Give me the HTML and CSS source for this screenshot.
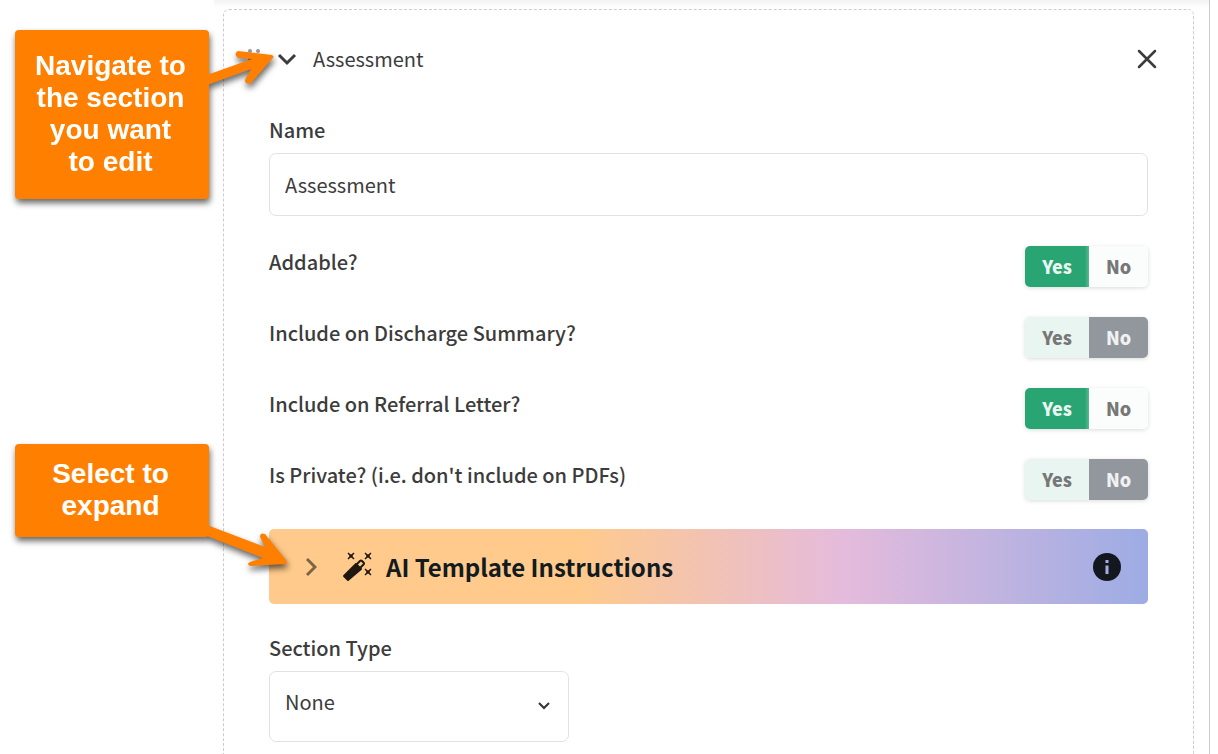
FILE: index.html
```html
<!DOCTYPE html>
<html lang="en">
<head>
    <meta charset="UTF-8">
    <meta name="viewport" content="width=device-width, initial-scale=1.0">
    <title>Edit Template Section</title>
    <link rel="stylesheet" href="styles.css">
</head>
<body>
    <main class="workspace">
        <section class="card">
            <header class="card-header">
                <svg class="drag-handle" width="12" height="20" viewBox="0 0 12 20" fill="#999">
                    <circle cx="2" cy="2" r="2"/><circle cx="10" cy="2" r="2"/>
                    <circle cx="2" cy="10" r="2"/><circle cx="10" cy="10" r="2"/>
                </svg>
                <button class="icon-button" type="button" aria-label="Collapse section">
                    <svg width="20" height="20" viewBox="0 0 20 20" fill="none" stroke="#3c3c3c" stroke-width="3">
                        <path d="M2 6l8 8 8-8"/>
                    </svg>
                </button>
                <span class="card-title">Assessment</span>
                <button class="icon-button" type="button" aria-label="Remove section">
                    <svg width="20" height="20" viewBox="0 0 20 20" fill="none" stroke="#3c3c3c" stroke-width="2.5" stroke-linecap="round">
                        <path d="M2 2l16 16M18 2L2 18"/>
                    </svg>
                </button>
            </header>

            <div class="field">
                <label for="name">Name</label>
                <input class="text-input" type="text" id="name" value="Assessment">
            </div>

            <div class="options">
                <div class="option" role="radiogroup" aria-labelledby="addable">
                    <span id="addable">Addable?</span>
                    <div class="toggle">
                        <input type="radio" name="addable" id="addable-yes" checked>
                        <label class="yes" for="addable-yes">Yes</label>
                        <input type="radio" name="addable" id="addable-no">
                        <label class="no" for="addable-no">No</label>
                    </div>
                </div>
                <div class="option" role="radiogroup" aria-labelledby="discharge">
                    <span id="discharge">Include on Discharge Summary?</span>
                    <div class="toggle">
                        <input type="radio" name="discharge" id="discharge-yes">
                        <label class="yes" for="discharge-yes">Yes</label>
                        <input type="radio" name="discharge" id="discharge-no" checked>
                        <label class="no" for="discharge-no">No</label>
                    </div>
                </div>
                <div class="option" role="radiogroup" aria-labelledby="referral">
                    <span id="referral">Include on Referral Letter?</span>
                    <div class="toggle">
                        <input type="radio" name="referral" id="referral-yes" checked>
                        <label class="yes" for="referral-yes">Yes</label>
                        <input type="radio" name="referral" id="referral-no">
                        <label class="no" for="referral-no">No</label>
                    </div>
                </div>
                <div class="option" role="radiogroup" aria-labelledby="private">
                    <span id="private">Is Private? (i.e. don't include on PDFs)</span>
                    <div class="toggle">
                        <input type="radio" name="private" id="private-yes">
                        <label class="yes" for="private-yes">Yes</label>
                        <input type="radio" name="private" id="private-no" checked>
                        <label class="no" for="private-no">No</label>
                    </div>
                </div>
            </div>

            <button class="ai-bar" type="button">
                <svg class="ai-chevron" width="12" height="20" viewBox="0 0 12 20" fill="none" stroke="#7c6444" stroke-width="3">
                    <path d="M2 2l8 8-8 8"/>
                </svg>
                <svg width="30" height="30" viewBox="0 0 30 30" fill="none" stroke="#1f1812">
                    <path d="M14 12l5 5L6 28 2 24z" fill="#1f1812" stroke-width="2" stroke-linejoin="round"/>
                    <path d="M14 13l4-4q1-1 2 0l1.500 1.500q1 1 0 2l-4 4" stroke-width="2"/>
                    <path d="M6 1l6 6M12 1L6 7M23 1l6 6M29 1l-6 6M23 17l6 6M29 17l-6 6" stroke-width="1.5"/>
                    <path d="M9 2.500L10.500 4 9 5.500 7.500 4zM26 2.500L27.500 4 26 5.500 24.500 4zM26 18.500l1.500 1.500-1.500 1.500-1.500-1.500z" fill="#1f1812"/>
                </svg>
                <span class="ai-title">AI Template Instructions</span>
                <svg width="28" height="28" viewBox="0 0 28 28" fill="#15171e">
                    <circle cx="14" cy="14" r="14"/>
                    <path d="M12.500 7h3v3h-3zM12.500 12.500h3V21h-3z" fill="#a5aee3"/>
                </svg>
            </button>

            <div class="field">
                <label for="section-type">Section Type</label>
                <div class="select-wrap">
                    <select id="section-type">
                        <option>None</option>
                    </select>
                    <svg class="select-arrow" width="12" height="8" viewBox="0 0 12 8" fill="none" stroke="#333" stroke-width="2">
                        <path d="M1 1l5 5 5-5"/>
                    </svg>
                </div>
            </div>
        </section>
    </main>

    <div class="callout callout-navigate">
        <p class="callout-text">Navigate to<br>the section<br>you want<br>to edit</p>
        <svg class="arrow" width="80" height="50" viewBox="0 0 80 50">
            <path d="M0 30L45 14 31 13Q26 9 31 6L65 10Q68 12 65 14L44 38Q38 40 38 35L44 24 0 40z"/>
        </svg>
    </div>
    <div class="callout callout-expand">
        <p class="callout-text">Select to<br>expand</p>
        <svg class="arrow" width="90" height="60" viewBox="0 0 90 60">
            <path d="M0 10L58 32 53 22Q53 17 58 19L79 45Q81 48 78 49L43 51Q39 49 43 47L56 43 0 21z"/>
        </svg>
    </div>
</body>
</html>
```
FILE: styles.css
```css
* {
    box-sizing: border-box;
}

body {
    margin: 0;
    height: 100vh;
    overflow: hidden;
    position: relative;
    background-color: #fff;
    color: #3c3c3c;
    font-family: 'Noto Sans CJK SC', 'Noto Sans', sans-serif;
    font-size: 20px;
    line-height: 32px;
}

button, input, select {
    font: inherit;
    color: inherit;
}

.workspace {
    display: flex;
    margin-left: 214px;
    margin-right: 8px;
    min-height: 100vh;
    padding: 9px 15px 0 9px;
    border-right: 1px solid #ccc;
    background: linear-gradient(#f3f3f3, #fff 8px);
}

.card {
    flex: 1;
    min-height: 100vh;
    padding: 0 45px;
    border: 1px dashed #ccc;
    border-radius: 6px;
}

.card-header {
    display: flex;
    align-items: center;
    height: 97px;
    margin: 0 -9px 7px -21px;
}

.drag-handle {
    margin-right: 17px;
}

.icon-button {
    display: flex;
    padding: 0;
    border: none;
    background: none;
    cursor: pointer;
}

.card-title {
    flex: 1;
    margin-left: 16px;
}

.field label {
    display: block;
    margin-bottom: 7px;
    font-weight: 500;
}

.text-input {
    display: block;
    width: 100%;
    height: 63px;
    padding: 0 15px;
    border: 1px solid #e2e2e2;
    border-radius: 7px;
    background-color: #fff;
}

.options {
    display: flex;
    flex-direction: column;
    gap: 30px;
    margin: 30px 0 29px;
}

.option {
    display: flex;
    justify-content: space-between;
    align-items: flex-start;
    font-weight: 500;
}

.toggle {
    display: flex;
    border-radius: 5px;
    overflow: hidden;
    box-shadow: 0 1px 4px rgba(0, 0, 0, 0.15);
}

.toggle input {
    position: absolute;
    opacity: 0;
}

.toggle label {
    width: 59px;
    line-height: 41px;
    text-align: center;
    font-weight: 900;
    font-size: 18px;
    color: #777;
    background-color: #fbfdfc;
    cursor: pointer;
}

.toggle .yes {
    width: 64px;
    background-color: #e9f5f1;
}

.toggle input:checked + .yes {
    color: #e9f5f1;
    background: linear-gradient(to left, #5fb893, #29a573 4px);
}

.toggle input:checked + .no {
    color: #f0f1f3;
    background-color: #92969d;
}

.ai-bar {
    display: flex;
    align-items: center;
    width: 100%;
    height: 75px;
    margin-bottom: 28px;
    padding: 0 27px 0 36px;
    border: none;
    border-radius: 5px;
    background: linear-gradient(to right, #ffca8b 35%, #e5bbdc 65%, #9dace4);
    color: #111b20;
    text-align: left;
    cursor: pointer;
}

.ai-chevron {
    margin-right: 25px;
}

.ai-title {
    flex: 1;
    margin-left: 14px;
    font-size: 24px;
    font-weight: bold;
}

.select-wrap {
    position: relative;
    max-width: 300px;
}

.select-wrap select {
    appearance: none;
    width: 100%;
    height: 71px;
    padding: 0 15px 9px;
    border: 1px solid #e2e2e2;
    border-radius: 7px;
    background-color: #fff;
}

.select-arrow {
    position: absolute;
    right: 19px;
    top: 31px;
    pointer-events: none;
}

/* Help callouts on top of the form */
.callout {
    position: absolute;
    left: 15px;
    width: 194px;
    filter: drop-shadow(1px 4px 3px rgba(0, 0, 0, 0.6));
}

.callout-text {
    margin: 0;
    padding: 20px 3px 21px 0;
    border-radius: 4px;
    background-color: #ff8000;
    color: #fff;
    font-family: 'Liberation Sans', Arial, sans-serif;
    font-size: 28px;
    font-weight: bold;
    text-align: center;
}

.callout-navigate {
    top: 30px;
}

.callout-expand {
    top: 444px;
}

.callout-expand .callout-text {
    padding-top: 14px;
    padding-bottom: 15px;
}

.arrow {
    position: absolute;
    left: 192px;
    top: 15px;
    fill: #ff8000;
}

.callout-expand .arrow {
    top: 71px;
}
```
